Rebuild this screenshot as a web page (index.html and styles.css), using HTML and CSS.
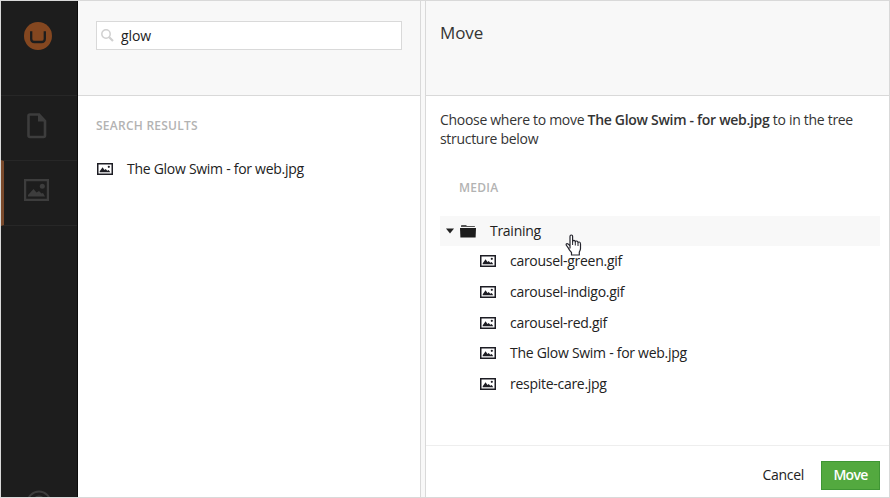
FILE: index.html
```
<!DOCTYPE html>
<html lang="en">
<head>
<meta charset="utf-8">
<title>Move media</title>
<link rel="stylesheet" href="styles.css">
</head>
<body>
<svg class="defs" aria-hidden="true">
  <symbol id="picture" viewBox="0 0 16 12">
    <path fill-rule="evenodd" d="M0 0H16V12H0ZM1.5 1.5V10.5H14.5V1.5Z"/>
    <path d="M2.7 9.3V8.2L5.6 4.3L7.4 6.9L8.7 5.9L10.3 7.7L11.7 7L13.3 9.3Z"/>
    <circle cx="11.8" cy="3.8" r="1.1"/>
  </symbol>
</svg>
<div class="app">
  <nav class="rail">
    <div class="rail-logo">
      <svg width="28" height="28" viewBox="0 0 28 28"><circle cx="14" cy="14" r="14" fill="#844720"/><path d="M7.200 9.300V17Q7.200 20 10.500 20H17.500Q20.800 20 20.800 17V9.300" fill="none" stroke="#1d1d1d" stroke-width="2.300"/></svg>
    </div>
    <div class="rail-item">
      <svg width="20" height="26" viewBox="0 0 20 26"><path d="M3 1.500H12L18 8V22.500Q18 24 16.500 24H3Q1.500 24 1.500 22.500V3Q1.500 1.500 3 1.500Z" fill="none" stroke="#3d3d3d" stroke-width="2.600"/><path d="M11 1V8.500H18.500Z" fill="#3d3d3d"/></svg>
    </div>
    <div class="rail-item active">
      <svg width="25" height="22" viewBox="0 0 25 22" fill="#3d3d3d"><path fill-rule="evenodd" d="M0 0H25V22H0ZM2.200 2.200V19.800H22.800V2.200Z"/><path d="M4 17.500V16L9.500 10L12.500 13.500L15 12L17.500 14.500L19 14L21 17.500Z"/><circle cx="18.300" cy="7.300" r="2.500"/></svg>
    </div>
    <div class="rail-help">
      <svg width="26" height="26" viewBox="0 0 26 26" fill="none" stroke="#3d3d3d" stroke-width="2"><circle cx="13" cy="13" r="11.500"/><path d="M9 10Q9 6.500 13 6.500T17 10Q17 12 13 14V17"/></svg>
    </div>
  </nav>
  <section class="search">
    <header class="bar">
      <div class="field">
        <svg width="13" height="13" viewBox="0 0 13 13" fill="none" stroke="#d0d0d0"><circle cx="5" cy="5" r="4.200" stroke-width="1.500"/><path d="M8.200 8.200L12 12" stroke-width="2.200"/></svg>
        <span>glow</span>
      </div>
    </header>
    <h2>SEARCH RESULTS</h2>
    <div class="result"><svg class="pic"><use href="#picture"/></svg><span>The Glow Swim - for web.jpg</span></div>
  </section>
  <div class="divider"></div>
  <section class="dialog">
    <header class="bar"><h1>Move</h1></header>
    <div class="body">
      <p>Choose where to move <b>The Glow Swim - for web.jpg</b> to in the tree structure below</p>
      <h2>MEDIA</h2>
      <div class="tree">
        <div class="row root">
          <svg class="caret" width="8" height="6" viewBox="0 0 8 6"><path d="M0 .5H8L4 5.500Z"/></svg>
          <svg class="folder" width="16" height="14" viewBox="0 0 16 14"><path d="M1 3V1.800Q1 1 1.800 1H6L7 2H14.500Q15 2 15 3Z" fill="#555"/><path d="M0 4H16L15.600 13.500H.4Z"/></svg>
          <span>Training</span>
          <svg class="pointer" width="17" height="22" viewBox="0 0 17 22"><path d="M5 14V2.500Q5 1 6.300 1T7.600 2.500V8Q7.600 6.300 8.900 6.300T10.300 8Q10.500 7 11.700 7T13 8.700Q13.200 8 14.300 8T15.500 10V14.500Q15.500 16 14.300 18V21H6.500V18.500Q4 16 3.200 13.800L1.200 11Q1 9.600 2.200 9.600T5 12Z" fill="#fff" stroke="#25252d" stroke-width="1.200" stroke-linejoin="round"/><path d="M7.600 8V11M10.300 8V11.500M13 9V12" stroke="#25252d"/></svg>
        </div>
        <div class="row"><svg class="pic"><use href="#picture"/></svg><span>carousel-green.gif</span></div>
        <div class="row"><svg class="pic"><use href="#picture"/></svg><span>carousel-indigo.gif</span></div>
        <div class="row"><svg class="pic"><use href="#picture"/></svg><span>carousel-red.gif</span></div>
        <div class="row"><svg class="pic"><use href="#picture"/></svg><span>The Glow Swim - for web.jpg</span></div>
        <div class="row"><svg class="pic"><use href="#picture"/></svg><span>respite-care.jpg</span></div>
      </div>
    </div>
    <footer><a>Cancel</a><button>Move</button></footer>
  </section>
</div>
</body>
</html>
```
FILE: styles.css
```
* { box-sizing: border-box; }
body { margin: 0; font: 14px/20px "Open Sans", sans-serif; letter-spacing: -.28px; color: #222; }
svg { display: block; flex: none; }
.defs { position: absolute; width: 0; height: 0; }
.app { display: flex; width: 890px; height: 498px; border: 1px solid #d9d9d9; overflow: hidden; background: #fff; }
.rail { width: 77px; flex: none; display: flex; flex-direction: column; background: #1d1d1d; border-right: 1px solid #0c0c0c; overflow: hidden; }
.rail-logo { height: 94px; padding: 21px 0 0 23px; flex: none; }
.rail-item { height: 65px; flex: none; display: flex; align-items: center; justify-content: center; padding: 0 5px 5px 0; border-top: 1px solid #272727; }
.rail-item.active { height: 66px; padding: 0 8px 6px 0; border-bottom: 1px solid #272727; border-left: 3px solid #7a4a2c; }
.rail-help { margin: auto 0 -19px 25px; }
.search { width: 342px; flex: none; }
.bar { height: 95px; background: #f8f8f8; border-bottom: 1px solid #d9d9d9; }
.search .bar { padding: 20px 18px 0 18px; }
.field { height: 29px; display: flex; align-items: center; gap: 7px; padding-left: 4px; border: 1px solid #d9d9d9; background: #fff; letter-spacing: -.1px; }
h1 { margin: 0; padding: 20px 0 0 14px; font-size: 17px; line-height: 24px; font-weight: 400; letter-spacing: -.1px; color: #343434; }
h2 { margin: 0; font-size: 12px; line-height: 20px; font-weight: 600; letter-spacing: .25px; color: #b3b3b3; }
.search h2 { margin: 20px 0 0 18px; }
.result { display: flex; align-items: center; gap: 14px; margin: 23px 0 0 19px; }
.pic { width: 16px; height: 12px; fill: #1d1d24; }
.divider { width: 6px; flex: none; background: #f8f8f8; border: solid #d9d9d9; border-width: 0 1px; }
.dialog { flex: 1; min-width: 0; display: flex; flex-direction: column; }
.dialog .bar { flex: none; }
.body { flex: 1; padding: 14px 9px 0 14px; }
p { margin: 0; line-height: 19px; letter-spacing: -.3px; color: #343434; }
b { font-weight: 600; }
.dialog h2 { margin: 30px 0 18px 19px; }
.row { height: 30.700px; display: flex; align-items: center; gap: 14px; padding-left: 40px; }
.root { position: relative; height: 30px; padding-left: 6px; background: #f8f8f8; gap: 0; }
.caret { margin-right: 6px; fill: #222; }
.folder { margin-right: 14px; fill: #1d1d1d; }
.pointer { position: absolute; left: 125px; top: 18px; z-index: 1; }
footer { height: 52px; flex: none; display: flex; align-items: center; justify-content: flex-end; gap: 17px; padding: 7px 9px 0 0; border-top: 1px solid #eee; }
button { width: 59px; height: 29px; padding: 0; border: 1px solid #3f9634; background: #53a93f; color: #fff; font: inherit; font-weight: 600; letter-spacing: -.7px; }
```
